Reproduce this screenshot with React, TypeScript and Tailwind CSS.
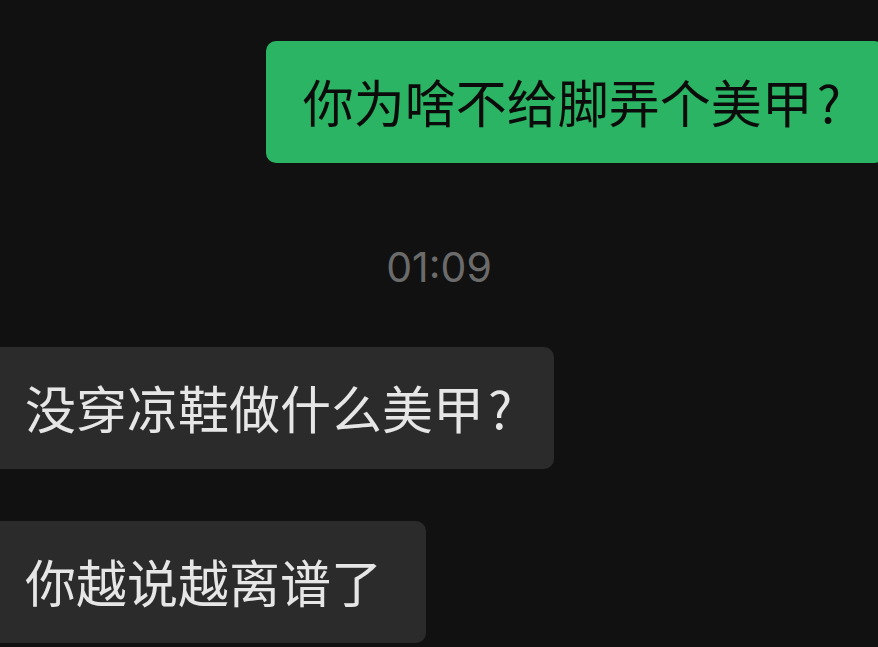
export default function App() {
  const cjk = { fontFamily: '"Noto Sans CJK SC", "Noto Sans", sans-serif' };
  return (
    <div className="w-[878px] h-[647px] overflow-hidden bg-[#111111] flex flex-col" style={cjk}>
      <div className="flex justify-end pt-[41px]">
        <div className="h-[122px] -mr-[6px] pl-[37px] pr-[43px] flex items-center rounded-[10px] bg-[#2ab463] text-[#0b0b0b] text-[51px] leading-none whitespace-nowrap">
          <span className="-mt-[2px]">你为啥不给脚弄个美甲<span className="ml-[4px]">?</span></span>
        </div>
      </div>

      <div className="h-[184px] flex items-start justify-center pt-[84px]">
        <span className="text-[41px] leading-none text-[#6b6b6b] font-['Inter',sans-serif]">01:09</span>
      </div>

      <div className="flex flex-col items-start gap-[52px]">
        <div className="h-[122px] -ml-[13px] pl-[38px] pr-[42px] flex items-center rounded-[10px] bg-[#2b2b2b] text-[#e6e6e6] text-[51px] leading-none whitespace-nowrap">
          <span className="-mt-[2px]">没穿凉鞋做什么美甲<span className="ml-[4px]">?</span></span>
        </div>
        <div className="h-[122px] -ml-[13px] pl-[38px] pr-[44px] flex items-center rounded-[10px] bg-[#2b2b2b] text-[#e6e6e6] text-[51px] leading-none whitespace-nowrap">
          <span className="-mt-[2px]">你越说越离谱了</span>
        </div>
      </div>
    </div>
  );
}
